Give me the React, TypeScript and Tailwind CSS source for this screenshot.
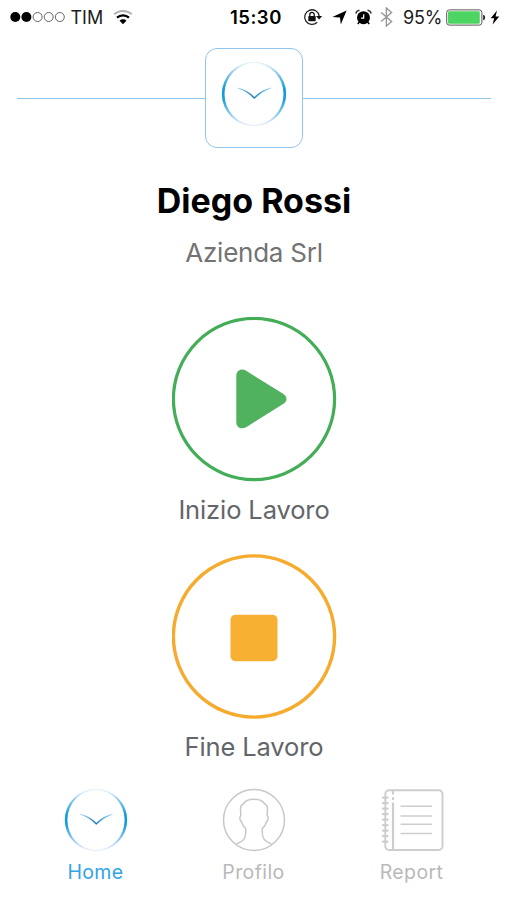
import { ReactNode } from "react";

const SignalDots = () => (
  <svg width="56" height="12" viewBox="0 0 56 12" className="shrink-0">
    {[5.3, 16.4, 27.6, 38.7, 49.8].map((cx, i) => (
      <circle
        key={cx}
        cx={cx}
        cy="6"
        r={i < 2 ? 5 : 4.5}
        fill={i < 2 ? "#000" : "none"}
        stroke={i < 2 ? "none" : "#555"}
        strokeWidth="0.9"
      />
    ))}
  </svg>
);

const WifiIcon = () => (
  <svg width="20" height="16" viewBox="0 0 20 16" fill="none" className="shrink-0">
    <path d="M1.200 5.400C6 .9 14 .9 18.800 5.400" stroke="#b0b0b0" strokeWidth="1.900" />
    <path d="M4 8.600c3.400-3.100 8.600-3.100 12 0" stroke="#000" strokeWidth="2.200" />
    <path d="M6.600 11.700c1.900-1.800 4.900-1.800 6.800 0L10 15.200z" fill="#000" />
  </svg>
);

const RotationLockIcon = () => (
  <svg width="20" height="18" viewBox="0 0 20 18" fill="none" className="shrink-0">
    <path d="M14.200 14.200A7.300 7.300 0 1 1 16.200 8" stroke="#222" strokeWidth="1.300" />
    <path d="M12.900 8h6.300l-3.100 3.600z" fill="#111" />
    <rect x="5.300" y="8" width="7.400" height="5.200" rx=".7" fill="#111" />
    <path d="M6.800 8.300V6.500a2.200 2.200 0 0 1 4.400 0v1.800" stroke="#111" strokeWidth="1.300" />
  </svg>
);

const LocationIcon = () => (
  <svg width="15" height="15" viewBox="0 0 15 15" className="shrink-0">
    <path d="M14.600.4 8.800 14.600 8 7.600.4 6.900z" fill="#000" />
  </svg>
);

const AlarmIcon = () => (
  <svg width="17" height="16" viewBox="0 0 17 16" fill="none" className="shrink-0">
    <circle cx="8.500" cy="8.700" r="6.500" fill="#000" />
    <path d="M.9 4.700A4 4 0 0 1 4.500 1.200M16.100 4.700a4 4 0 0 0-3.600-3.500" stroke="#333" strokeWidth="1.400" />
    <path d="m4.300 13-1.500 2M12.700 13l1.500 2" stroke="#000" strokeWidth="1.500" />
    <path d="M8.700 5.200v3.900H6" stroke="#fff" strokeWidth="1.200" />
  </svg>
);

const BluetoothIcon = () => (
  <svg width="13" height="20" viewBox="0 0 13 20" fill="none" className="shrink-0">
    <path d="m1.200 5.500 10.400 9L6.400 19V1l5.200 4.500-10.400 9" stroke="#979797" strokeWidth="1.400" />
  </svg>
);

const BatteryIcon = () => (
  <svg width="40" height="17" viewBox="0 0 40 17" className="shrink-0">
    <rect x=".7" y=".9" width="35.200" height="15.200" rx="2.600" fill="#fff" stroke="#555" />
    <rect x="2" y="2.200" width="31.800" height="12.600" rx="1.300" fill="#4cd562" />
    <path d="M37.200 5.700c2.600.5 2.600 5.100 0 5.600z" fill="#222" />
  </svg>
);

const BoltIcon = () => (
  <svg width="10" height="15" viewBox="0 0 10 15" className="shrink-0">
    <path d="M7 .6.700 8.200h3.500L2.600 14.400l6.700-8H5.600z" fill="#000" />
  </svg>
);

const StatusBar = () => (
  <div className="flex h-[34px] items-center text-[18px] text-[#1c1c1c]">
    <div className="ml-[9.500px] flex w-[220.500px] items-center">
      <SignalDots />
      <span className="ml-[5px] w-[42px]">TIM</span>
      <WifiIcon />
    </div>
    <span className="w-[73px] pt-px text-[18.500px] font-semibold tracking-[0.500px] text-black">15:30</span>
    <RotationLockIcon />
    <span className="ml-[8.500px] flex"><LocationIcon /></span>
    <span className="ml-[8.500px] flex"><AlarmIcon /></span>
    <span className="ml-[8px] flex"><BluetoothIcon /></span>
    <span className="ml-[10px] w-[43px] tracking-[-0.2px]">95%</span>
    <BatteryIcon />
    <span className="ml-[3.500px] flex"><BoltIcon /></span>
  </div>
);

const ClockIcon = ({ id, size }: { id: string; size: number }) => (
  <svg width={size} height={size} viewBox="0 0 66 66" fill="none">
    <defs>
      <linearGradient id={`${id}-ring`} x1="0" y1="0" x2="0" y2="1">
        <stop offset="0" stopColor="#dceaf8" stopOpacity=".5" />
        <stop offset=".15" stopColor="#9bd0ee" />
        <stop offset=".42" stopColor="#129bd8" />
        <stop offset=".58" stopColor="#159ddb" />
        <stop offset=".85" stopColor="#a5d2f2" />
        <stop offset="1" stopColor="#e0e4fa" stopOpacity=".6" />
      </linearGradient>
      <linearGradient id={`${id}-hands`} x1="0" y1="0" x2="1" y2="0">
        <stop offset="0" stopColor="#a5d6f0" />
        <stop offset=".47" stopColor="#1773b0" />
        <stop offset=".6" stopColor="#2d94c9" />
        <stop offset="1" stopColor="#98d2ee" />
      </linearGradient>
    </defs>
    <path
      d="M33 .8a32.200 32.200 0 1 0 0 64.400a32.200 32.200 0 1 0 0-64.400zM33 2.100a29.500 30.900 0 1 1 0 61.800a29.500 30.900 0 1 1 0-61.800z"
      fill={`url(#${id}-ring)`}
      fillRule="evenodd"
    />
    <path
      d="M16.500 27Q26.500 29 33.300 36.200Q40.500 29 50 27Q41 30 33.300 37.700Q26 30 16.500 27z"
      fill={`url(#${id}-hands)`}
      stroke={`url(#${id}-hands)`}
      strokeWidth=".5"
    />
  </svg>
);

const ProfileIcon = () => (
  <svg width="64" height="64" viewBox="0 0 64 64" fill="none" stroke="#c8c8c8" strokeWidth="1.500">
    <circle cx="32" cy="32" r="30.500" />
    <path d="M14.500 56c3.500-1.500 6-2.600 7.500-4.800 1.800-2.700 2-7.200 1.600-10.900-2-1.300-3.300-3.200-3.800-6.300-2-.4-2.500-5-1-6.500l-.3-7c0-2 .9-3.600 2.700-4.500 2-3.400 6.400-4.700 10.800-4.700s8.800 1.300 10.800 4.700c1.800.9 2.700 2.500 2.700 4.500l-.3 7c1.500 1.500 1 6.100-1 6.500-.5 3.100-1.800 5-3.800 6.300-.4 3.700-.2 8.200 1.600 10.900 1.500 2.200 4 3.300 7.500 4.800" />
  </svg>
);

const ReportIcon = () => (
  <svg width="64" height="64" viewBox="0 0 64 64" fill="none" stroke="#cdcdcd" strokeWidth="1.900">
    <rect x="5.300" y="2.200" width="57.200" height="59.800" rx="4" />
    <path d="M13 3v3.500M13 9.200v2.800M13 14.500V62" strokeWidth="2.200" />
    <path d="M20.500 18.300h31.500M20.500 28h31.500M20.500 36.300h31.500M20.500 45.400h31.500" strokeWidth="1.500" />
    {[9.6, 15.1, 20.6, 26.1, 31.6, 37.1, 42.6, 48.1, 53.6].map((y) => (
      <path key={y} d={`M3 ${y}h4.500`} strokeWidth="2.300" strokeLinecap="round" />
    ))}
  </svg>
);

const PlayIcon = () => (
  <svg width="165" height="165" viewBox="0 0 165 165">
    <circle cx="82" cy="82" r="80.600" fill="none" stroke="#43ad57" strokeWidth="3.200" />
    <path d="M64.300 59c0-6 5.600-8 10.200-5l36.600 22.700c4.500 2.800 4.500 7.600 0 10.400L74.500 109.900c-4.600 3-10.200 1-10.200-5z" fill="#50b15f" />
  </svg>
);

const StopIcon = () => (
  <svg width="165" height="165" viewBox="0 0 165 165">
    <circle cx="82" cy="82.500" r="80.600" fill="none" stroke="#f6ab2f" strokeWidth="3.400" />
    <rect x="58.500" y="60.700" width="47" height="46.600" rx="5" fill="#f8b033" />
  </svg>
);

const ActionButton = ({ label, children }: { label: string; children: ReactNode }) => (
  <button type="button" className="flex flex-col items-center">
    {children}
    <span className="mt-[12px] text-[25.500px] leading-[32px] tracking-[-0.120px] text-[#636669]">{label}</span>
  </button>
);

const TabItem = ({ label, active, children }: { label: string; active?: boolean; children: ReactNode }) => (
  <button type="button" className="flex w-[158px] flex-col items-center">
    <span className="flex h-16 items-center">{children}</span>
    <span
      className={`mt-[8px] text-[19.500px] leading-[24px] tracking-[0.4px] ${
        active ? "text-[#2fa4e7]" : "text-[#b9b9b9]"
      }`}
    >
      {label}
    </span>
  </button>
);

export default function App() {
  return (
    <div className="h-[900px] w-[507px] overflow-hidden bg-white font-['Inter',sans-serif]">
      <StatusBar />

      <header className="ml-[17px] mr-[16px] mt-[14px] flex items-center">
        <div className="h-px w-[188px] bg-[#8fc5e8]" />
        <div className="flex h-[100px] w-[98px] items-center justify-center rounded-[12px] border border-[#91c6ec] pb-[8px]">
          <ClockIcon id="logo" size={66} />
        </div>
        <div className="h-px flex-1 bg-[#8fc5e8]" />
      </header>

      <main className="flex flex-col items-center pl-px">
        <h1 className="mt-[33px] text-[34px] font-bold leading-[40px] text-black">Diego Rossi</h1>
        <p className="mt-[16px] text-[26px] leading-[32px] tracking-[-0.250px] text-[#737373]">Azienda Srl</p>
        <div className="mt-[48px] flex flex-col gap-[28px]">
          <ActionButton label="Inizio Lavoro">
            <PlayIcon />
          </ActionButton>
          <ActionButton label="Fine Lavoro">
            <StopIcon />
          </ActionButton>
        </div>
      </main>

      <nav className="mt-[25px] flex justify-center">
        <TabItem label="Home" active>
          <ClockIcon id="home" size={64} />
        </TabItem>
        <TabItem label="Profilo">
          <ProfileIcon />
        </TabItem>
        <TabItem label="Report">
          <ReportIcon />
        </TabItem>
      </nav>
    </div>
  );
}
